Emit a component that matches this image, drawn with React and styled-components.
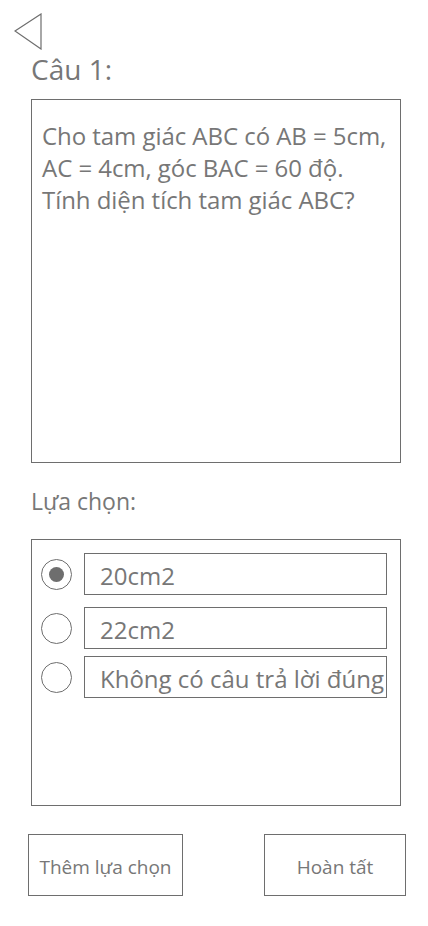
import React from 'react';
import styled, { createGlobalStyle } from 'styled-components';

const Global = createGlobalStyle`
  body {
    margin: 0;
    background: #fff;
    font-family: "Open Sans", "Noto Sans", sans-serif;
    color: #777;
  }
`

const Page = styled.div`
  width: 428px;
  height: 926px;
  box-sizing: border-box;
  padding: 13px 27px 0 31px;
  display: flex;
  flex-direction: column;
`

const Back = styled.button`
  margin-left: -17px;
  padding: 0;
  border: none;
  background: none;
  width: 28px;
  height: 37px;
  display: block;
  cursor: pointer;
`

const Title = styled.h1`
  margin: 1px 0 0;
  font-size: 28px;
  font-weight: 400;
  line-height: 36px;
  color: #777;
`

const Box = styled.div`
  box-sizing: border-box;
  border: 1px solid #6e6e6e;
  height: ${p => p.h}px;
  margin-top: ${p => p.mt}px;
`

const Question = styled(Box)`
  padding: 20px 0 0 10px;
  font-size: 24px;
  line-height: 32px;
  white-space: nowrap;
  letter-spacing: -0.05px;
`

const Label = styled.div`
  margin-top: 22px;
  font-size: 23px;
  line-height: 32px;
`

const Options = styled(Box)`
  padding: 13px 13px 0 9px;
  display: flex;
  flex-direction: column;
  gap: 12px;
`

const Row = styled.div`
  display: flex;
  align-items: center;
  gap: 12px;
  margin-top: ${p => p.mt || 0}px;
`

const Radio = styled.span`
  box-sizing: border-box;
  width: 31px;
  height: 31px;
  border-radius: 50%;
  border: 1px solid #6e6e6e;
  display: flex;
  align-items: center;
  justify-content: center;
  flex: none;

  &::after {
    content: '';
    display: ${p => (p.checked ? 'block' : 'none')};
    width: 15px;
    height: 15px;
    border-radius: 50%;
    background: #6e6e6e;
  }
`

const Field = styled.div`
  box-sizing: border-box;
  flex: 1;
  height: 42px;
  border: 1px solid #6e6e6e;
  padding: 2px 0 0 15px;
  display: flex;
  align-items: center;
  font-size: 24px;
  white-space: nowrap;
  overflow: hidden;
`

const Actions = styled.div`
  margin-top: 28px;
  margin-left: -3px;
  margin-right: -5px;
  display: flex;
  justify-content: space-between;
`

const Button = styled.button`
  box-sizing: border-box;
  width: ${p => p.w}px;
  height: 62px;
  border: 1px solid #6e6e6e;
  background: #fff;
  color: #777;
  font-family: inherit;
  font-size: 19px;
  padding: 3px 0 0;
`

const options = [
  { text: '20cm2', checked: true },
  { text: '22cm2' },
  { text: 'Không có câu trả lời đúng', mt: -5 },
];

const App = () => {
  return (
    <Page>
      <Global />
      <Back aria-label="back">
        <svg width="28" height="37" viewBox="0 0 28 37">
          <polygon points="1,18 27,1 27,36" fill="none" stroke="#6e6e6e" strokeWidth="1.2" />
        </svg>
      </Back>
      <Title>Câu 1:</Title>
      <Question h={364} mt={12}>
        Cho tam giác ABC có AB = 5cm,<br />
        AC = 4cm, góc BAC = 60 độ.<br />
        Tính diện tích tam giác ABC?
      </Question>
      <Label>Lựa chọn:</Label>
      <Options h={267} mt={22}>
        {options.map((o, i) => (
          <Row key={i} mt={o.mt}>
            <Radio checked={o.checked} />
            <Field>{o.text}</Field>
          </Row>
        ))}
      </Options>
      <Actions>
        <Button w={155}>Thêm lựa chọn</Button>
        <Button w={142}>Hoàn tất</Button>
      </Actions>
    </Page>
  );
};

export default App;
